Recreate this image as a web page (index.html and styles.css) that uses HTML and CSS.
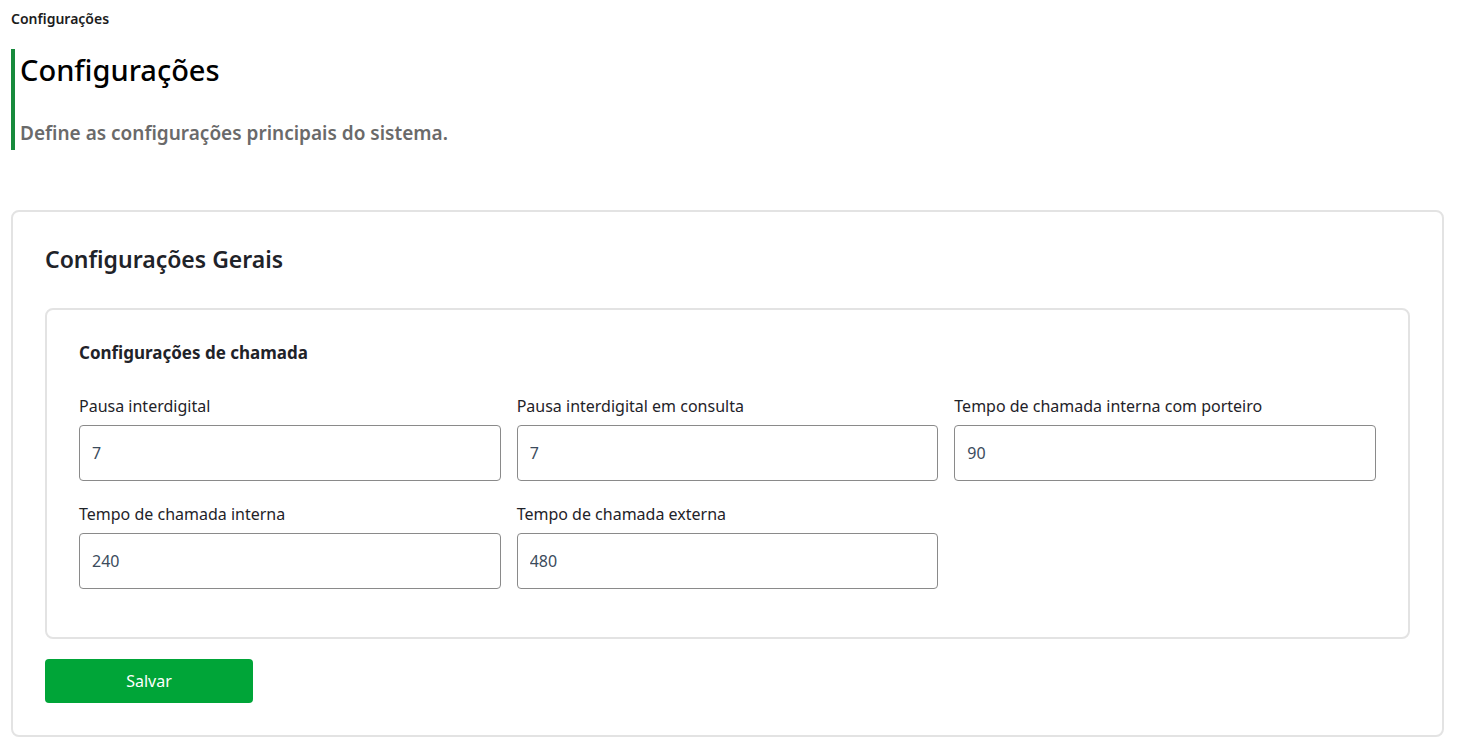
FILE: index.html
```html
<!DOCTYPE html>
<html lang="pt-BR">
<head>
  <meta charset="UTF-8">
  <meta name="viewport" content="width=device-width, initial-scale=1.0">
  <title>Configurações</title>
  <link rel="stylesheet" href="styles.css">
</head>
<body>
  <div class="page">
    <div class="breadcrumb">Configurações</div>

    <header class="page-header">
      <h1>Configurações</h1>
      <p>Define as configurações principais do sistema.</p>
    </header>

    <main class="card">
      <h2>Configurações Gerais</h2>

      <section class="inner-card">
        <h3>Configurações de chamada</h3>
        <div class="fields">
          <div class="field">
            <label for="pausa">Pausa interdigital</label>
            <input type="text" id="pausa" value="7">
          </div>
          <div class="field">
            <label for="pausa-consulta">Pausa interdigital em consulta</label>
            <input type="text" id="pausa-consulta" value="7">
          </div>
          <div class="field">
            <label for="tempo-porteiro">Tempo de chamada interna com porteiro</label>
            <input type="text" id="tempo-porteiro" value="90">
          </div>
          <div class="field">
            <label for="tempo-interna">Tempo de chamada interna</label>
            <input type="text" id="tempo-interna" value="240">
          </div>
          <div class="field">
            <label for="tempo-externa">Tempo de chamada externa</label>
            <input type="text" id="tempo-externa" value="480">
          </div>
        </div>
      </section>

      <button class="btn-save">Salvar</button>
    </main>
  </div>
</body>
</html>
```

FILE: styles.css
```css
/* General Styles */
body {
  font-family: 'Noto Sans', 'Open Sans', sans-serif;
  margin: 0;
  padding: 0;
  background-color: #fff;
  color: #1f2329;
}

.page {
  padding: 10px 13px 10px 11px;
}

.breadcrumb {
  font-size: 14px;
  font-weight: 600;
  line-height: 18px;
  color: #1c1c1c;
}

/* Header */
.page-header {
  margin-top: 21px;
  border-left: 4px solid #178a3c;
  padding-left: 5px;
  height: 101px;
}

.page-header h1 {
  margin: 0;
  padding-top: 1px;
  font-size: 29px;
  font-weight: 500;
  line-height: 40px;
  color: #000;
}

.page-header p {
  margin: 29px 0 0;
  font-size: 19px;
  font-weight: 600;
  line-height: 28px;
  color: #6a6a6a;
}

/* Cards */
.card {
  margin-top: 60px;
  border: 2px solid #e3e3e3;
  border-radius: 8px;
  padding: 30px 32px 32px;
}

.card h2 {
  margin: 0;
  padding-top: 1px;
  font-size: 23px;
  font-weight: 600;
  line-height: 32px;
  color: #1f2329;
}

.inner-card {
  margin-top: 33px;
  border: 2px solid #e3e3e3;
  border-radius: 8px;
  padding: 31px 32px 48px;
}

.inner-card h3 {
  margin: 0;
  font-size: 17px;
  font-weight: 700;
  line-height: 24px;
  color: #1f2329;
}

/* Fields */
.fields {
  margin-top: 31px;
  display: grid;
  grid-template-columns: repeat(3, 1fr);
  column-gap: 16px;
  row-gap: 23px;
}

.field label {
  display: block;
  font-size: 16px;
  line-height: 20px;
  color: #1f2329;
  margin-bottom: 9px;
}

.field input {
  box-sizing: border-box;
  width: 100%;
  height: 56px;
  padding: 0 12px;
  border: 1px solid #8a8a8a;
  border-radius: 4px;
  font-family: inherit;
  font-size: 16px;
  color: #3b4b5c;
}

.field input:focus {
  outline: none;
  border-color: #178a3c;
}

/* Buttons */
.btn-save {
  margin-top: 20px;
  width: 208px;
  height: 44px;
  border: none;
  border-radius: 4px;
  background-color: #00a538;
  color: #fff;
  font-family: inherit;
  font-size: 16px;
  cursor: pointer;
}

.btn-save:hover {
  background-color: #008f30;
}
```
